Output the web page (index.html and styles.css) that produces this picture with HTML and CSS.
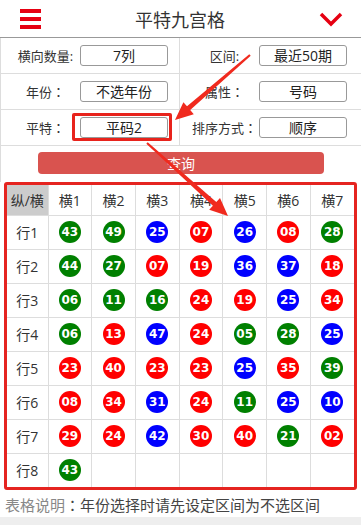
FILE: index.html
```html
<!DOCTYPE html>
<html lang="zh-CN">
<head>
  <meta charset="UTF-8" />
  <meta name="viewport" content="width=device-width, initial-scale=1.0"/>
  <title>平特九宫格</title>
  <link rel="stylesheet" href="styles.css">
</head>
<body>

<!-- Top bar -->
<div class="topbar">
  <span class="menu-icon"><i></i><i></i><i></i></span>
  <h1>平特九宫格</h1>
  <svg class="chevron" width="24" height="16" viewBox="0 0 24 16">
    <polyline points="2,3 12,13 22,3" fill="none" stroke="#e60012" stroke-width="3.5"/>
  </svg>
</div>

<!-- Filters -->
<div class="filters">
  <div class="frow">
    <div class="fcell"><label>横向数量:</label><span class="sel">7列</span></div>
    <div class="fcell"><label>区间:</label><span class="sel">最近50期</span></div>
  </div>
  <div class="frow">
    <div class="fcell"><label>年份<span class="colon" lang="zh-TW">：</span></label><span class="sel">不选年份</span></div>
    <div class="fcell"><label>属性<span class="colon" lang="zh-TW">：</span></label><span class="sel">号码</span></div>
  </div>
  <div class="frow">
    <div class="fcell"><label>平特<span class="colon" lang="zh-TW">：</span></label><span class="sel mark">平码2</span></div>
    <div class="fcell"><label>排序方式<span class="colon" lang="zh-TW">：</span></label><span class="sel">顺序</span></div>
  </div>
  <div class="btn-row">
    <button class="btn">查询</button>
  </div>
</div>

<!-- Result grid -->
<div class="grid-box">
  <table class="grid">
    <tr><th class="corner">纵/横</th><th>横1</th><th>横2</th><th>横3</th><th>横4</th><th>横5</th><th>横6</th><th>横7</th></tr>
    <tr><td>行1</td><td><b class="g">43</b></td><td><b class="g">49</b></td><td><b class="b">25</b></td><td><b class="r">07</b></td><td><b class="b">26</b></td><td><b class="r">08</b></td><td><b class="g">28</b></td></tr>
    <tr><td>行2</td><td><b class="g">44</b></td><td><b class="g">27</b></td><td><b class="r">07</b></td><td><b class="r">19</b></td><td><b class="b">36</b></td><td><b class="b">37</b></td><td><b class="r">18</b></td></tr>
    <tr><td>行3</td><td><b class="g">06</b></td><td><b class="g">11</b></td><td><b class="g">16</b></td><td><b class="r">24</b></td><td><b class="r">19</b></td><td><b class="b">25</b></td><td><b class="r">34</b></td></tr>
    <tr><td>行4</td><td><b class="g">06</b></td><td><b class="r">13</b></td><td><b class="b">47</b></td><td><b class="r">24</b></td><td><b class="g">05</b></td><td><b class="g">28</b></td><td><b class="b">25</b></td></tr>
    <tr><td>行5</td><td><b class="r">23</b></td><td><b class="r">40</b></td><td><b class="r">23</b></td><td><b class="r">23</b></td><td><b class="b">25</b></td><td><b class="r">35</b></td><td><b class="g">39</b></td></tr>
    <tr><td>行6</td><td><b class="r">08</b></td><td><b class="r">34</b></td><td><b class="b">31</b></td><td><b class="r">24</b></td><td><b class="g">11</b></td><td><b class="b">25</b></td><td><b class="b">10</b></td></tr>
    <tr><td>行7</td><td><b class="r">29</b></td><td><b class="r">24</b></td><td><b class="b">42</b></td><td><b class="r">30</b></td><td><b class="r">40</b></td><td><b class="g">21</b></td><td><b class="r">02</b></td></tr>
    <tr><td>行8</td><td><b class="g">43</b></td><td></td><td></td><td></td><td></td><td></td><td></td></tr>
  </table>
</div>

<p class="note"><span class="dim">表格说明</span><span class="colon" lang="zh-TW">：</span>年份选择时请先设定区间为不选区间</p>
<div class="bottom-band"></div>

<!-- Annotation arrows drawn over the page -->
<svg class="arrows" width="361" height="525" viewBox="0 0 361 525">
  <polygon fill="#f02a1e" points="250.7,55.8 190.2,110.1 193.8,114.3 175,120 183.4,102.2 187.0,106.3 249.3,54.2"/>
  <polygon fill="#f02a1e" points="146.3,143.7 212.9,205.8 209.2,209.8 228,216 220.0,198.0 216.3,202.0 147.7,142.3"/>
</svg>

</body>
</html>
```

FILE: styles.css
```css
* { margin: 0; padding: 0; box-sizing: border-box; }
html, body {
  width: 100%;
  height: 100%;
  overflow: hidden;
  background: #fff;
  font-family: "Open Sans", "Noto Sans CJK SC", sans-serif;
  color: #333;
}
body { position: relative; }

.topbar {
  height: 38px;
  border-bottom: 1px solid #999;
  display: flex;
  align-items: center;
  justify-content: space-between;
  padding: 0 18px 0 20px;
}

.topbar h1 {
  font-size: 18px;
  font-weight: normal;
  color: #333;
}

.menu-icon {
  display: flex;
  flex-direction: column;
  gap: 4px;
  width: 21px;
}
.menu-icon i {
  display: block;
  height: 4px;
  background: #e60012;
}

/* full-width colon with the glyph centred in its box */
.colon { font-family: "Noto Sans CJK TC", sans-serif; }

.filters {
  border-left: 1px solid #ddd;
}

.frow {
  display: grid;
  grid-template-columns: 178px 1fr;
  height: 36px;
  border-bottom: 1px solid #ddd;
}

.fcell {
  display: flex;
  align-items: center;
  padding-left: 10px;
}
.fcell + .fcell { border-left: 1px solid #ddd; }

.fcell label {
  width: 69px;
  text-align: center;
  font-size: 13px;
  color: #333;
}

.sel {
  width: 88px;
  height: 21px;
  border: 1px solid #999;
  border-radius: 3px;
  text-align: center;
  font-size: 14px;
  line-height: 19px;
  color: #222;
  position: relative;
}

.sel.mark::after {
  content: "";
  position: absolute;
  left: -9px; top: -5px; right: -5px; bottom: -4px;
  border: 3px solid #e8231c;
  border-radius: 2px;
}

.btn-row {
  height: 36px;
  padding-top: 6px;
  padding-left: 37px;
}

.btn {
  width: 286px;
  height: 22px;
  border: none;
  border-radius: 4px;
  background: #d9534f;
  color: #fff;
  font-family: inherit;
  font-size: 14px;
}

.grid-box {
  margin: 0 4px;
  border: 3px solid #e52420;
  border-radius: 3px;
  overflow: hidden;
}

.grid {
  width: 347px;
  border-collapse: collapse;
  table-layout: fixed;
}

.grid th, .grid td {
  border: 1px solid #ddd;
  text-align: center;
  font-weight: normal;
  font-size: 14px;
  color: #333;
}
.grid tr > :first-child { border-left: none; width: 41px; }
.grid tr > :last-child { border-right: none; }
.grid tr:first-child > * { border-top: none; height: 30px; }
.grid tr:last-child > * { border-bottom: none; }
.grid td { height: 34px; }

.grid th.corner { background: #ccc; }

.grid b {
  display: inline-block;
  width: 22px;
  height: 22px;
  border-radius: 50%;
  color: #fff;
  font-family: "DejaVu Sans", sans-serif;
  font-weight: bold;
  font-size: 12px;
  line-height: 22px;
  vertical-align: middle;
}
.grid b.g { background: #008000; }
.grid b.b { background: #0000ff; }
.grid b.r { background: #ff0000; }

.note {
  height: 27px;
  line-height: 30px;
  padding-left: 5px;
  font-size: 15px;
  color: #444;
}
.note .dim { color: #888; }

.bottom-band {
  height: 10px;
  background: #eee;
}

.arrows {
  position: absolute;
  top: 0; left: 0;
  pointer-events: none;
}
```
